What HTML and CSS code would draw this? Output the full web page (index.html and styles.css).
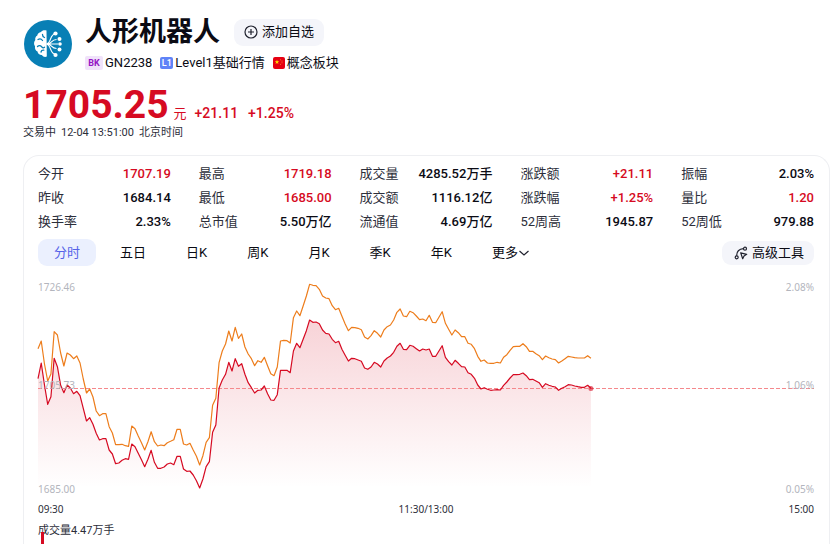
FILE: index.html
```html
<!DOCTYPE html>
<html lang="zh-CN">

<head>
    <title>人形机器人 GN2238</title>
    <meta charset="UTF-8">
    <meta name="viewport" content="width=device-width, initial-scale=1">
    <link rel="stylesheet" href="styles.css">
</head>

<body>
    <header class="quote-head">
        <svg class="logo" viewBox="-1 -1 50 50" aria-hidden="true">
            <circle cx="24" cy="24" r="24" fill="#087fb5" />
            <path d="M22.500 10.500c-2-.8-4.500-.3-5.500 1.500-2 .2-3.500 1.700-3.700 3.500-1.700 1-2.400 2.700-2 4.500-1.500 1.600-1.700 4.400-.3 6.200-.4 2.200.6 4.400 2.500 5.300.3 2.300 2.300 3.800 4.300 3.600 1.200 1.800 3.500 2.400 5 1.400z" fill="#fff" />
            <path d="M14 19.500c1.600-1 3.400-.6 4.500 1M18.500 14.500c0 1.500.7 2.500 2 3M13.500 26.500c1.200-1.200 3-1.200 4 .2s2.200 1.400 3 .6M17 32c.3-1.300 1.400-2 2.800-1.800" fill="none" stroke="#087fb5" stroke-width="1.300" stroke-linecap="round" />
            <path d="M22 24H34M23 24c5 0 4-4.500 9.500-4.500M23 24c5 0 4 4.500 9.500 4.500M23 23.500c4 0 3-9.500 8-9.500M23 24.500c4 0 3 9.500 8 9.500" fill="none" stroke="#fff" stroke-width="1.200" />
            <g fill="#fff">
                <circle cx="31.500" cy="13.500" r="2.100" />
                <circle cx="35.500" cy="19" r="2" />
                <circle cx="36" cy="24" r="1.800" />
                <circle cx="35.500" cy="29.500" r="2" />
                <circle cx="31.500" cy="35" r="2.100" />
            </g>
        </svg>
        <div class="quote-info">
            <div class="name-row">
                <h1>人形机器人</h1>
                <button type="button" class="btn btn-add">
                    <svg class="icon-add" viewBox="0 0 14 14" aria-hidden="true">
                        <circle cx="7" cy="7" r="6" />
                        <path d="M7 4v6M4 7h6" />
                    </svg>
                    添加自选
                </button>
            </div>
            <div class="tags">
                <span class="tag"><b class="badge badge-bk">BK</b>GN2238</span>
                <span class="tag"><b class="badge badge-l1">L1</b>Level1基础行情</span>
                <span class="tag">
                    <svg class="flag" viewBox="0 0 12 12" aria-hidden="true">
                        <rect width="12" height="12" rx="2" fill="#e60012" />
                        <path d="M4 2.700l.6 1.500 1.600.1-1.200 1 .4 1.600L4 6l-1.400.9.400-1.600-1.200-1 1.600-.1z" fill="#ffde00" />
                        <g fill="#f2932c">
                            <circle cx="7.500" cy="2.700" r=".5" />
                            <circle cx="9" cy="4" r=".5" />
                            <circle cx="9" cy="5.800" r=".5" />
                            <circle cx="7.500" cy="7.200" r=".5" />
                        </g>
                    </svg>
                    概念板块
                </span>
            </div>
        </div>
    </header>

    <div class="price-row">
        <strong class="price">1705.25</strong>
        <span class="unit">元</span>
        <span class="change">+21.11</span>
        <span class="change">+1.25%</span>
    </div>
    <div class="status">
        <span>交易中</span>
        <span>12-04 13:51:00</span>
        <span>北京时间</span>
    </div>

    <main class="card">
        <dl class="stats">
            <div><dt>今开</dt><dd class="up">1707.19</dd></div>
            <div><dt>最高</dt><dd class="up">1719.18</dd></div>
            <div><dt>成交量</dt><dd>4285.52万手</dd></div>
            <div><dt>涨跌额</dt><dd class="up">+21.11</dd></div>
            <div><dt>振幅</dt><dd>2.03%</dd></div>
            <div><dt>昨收</dt><dd>1684.14</dd></div>
            <div><dt>最低</dt><dd class="up">1685.00</dd></div>
            <div><dt>成交额</dt><dd>1116.12亿</dd></div>
            <div><dt>涨跌幅</dt><dd class="up">+1.25%</dd></div>
            <div><dt>量比</dt><dd class="up">1.20</dd></div>
            <div><dt>换手率</dt><dd>2.33%</dd></div>
            <div><dt>总市值</dt><dd>5.50万亿</dd></div>
            <div><dt>流通值</dt><dd>4.69万亿</dd></div>
            <div><dt>52周高</dt><dd>1945.87</dd></div>
            <div><dt>52周低</dt><dd>979.88</dd></div>
        </dl>

        <nav class="toolbar">
            <div class="tabs">
                <button type="button" class="tab active">分时</button>
                <button type="button" class="tab">五日</button>
                <button type="button" class="tab">日K</button>
                <button type="button" class="tab">周K</button>
                <button type="button" class="tab">月K</button>
                <button type="button" class="tab">季K</button>
                <button type="button" class="tab">年K</button>
                <button type="button" class="tab">更多<svg class="icon-more" viewBox="0 0 12 12" aria-hidden="true"><path d="M1.500 4L6 8l4.500-4" /></svg></button>
            </div>
            <button type="button" class="btn btn-tools">
                <svg class="icon-tools" viewBox="0 0 14 14" aria-hidden="true">
                    <circle cx="2.700" cy="11.300" r="1.500" />
                    <circle cx="11" cy="2.700" r="1.500" />
                    <path d="M2.700 9.800C2.500 5.500 5 2.900 9.500 2.700M6.700 6.800l6 1.500-2.700 1.600-1.300 2.800z" />
                </svg>
                高级工具
            </button>
        </nav>

        <section class="chart">
            <div class="axis axis-left">
                <span>1726.46</span>
                <span class="axis-mid">1705.73</span>
                <span>1685.00</span>
            </div>
            <div class="axis axis-right">
                <span>2.08%</span>
                <span class="axis-mid">1.06%</span>
                <span>0.05%</span>
            </div>
            <!-- one x unit = one trading minute -->
            <svg class="plot" viewBox="0 0 240 210" preserveAspectRatio="none" role="img" aria-label="分时">
                <defs>
                    <linearGradient id="fill" gradientUnits="userSpaceOnUse" x1="0" y1="40" x2="0" y2="208">
                        <stop offset="0" stop-color="#d60a22" stop-opacity=".18" />
                        <stop offset="1" stop-color="#d60a22" stop-opacity="0" />
                    </linearGradient>
                </defs>
                <path id="area" fill="url(#fill)" />
                <path class="now-line" d="M0 108.500H240" />
                <path id="avg" class="line line-avg" />
                <path id="price" class="line line-price" />
                <path class="now-dot" d="M171 108.500h0.001" />
            </svg>
        </section>
        <div class="times">
            <span>09:30</span>
            <span>11:30/13:00</span>
            <span>15:00</span>
        </div>
        <section class="volume">
            <div class="volume-title">成交量4.47万手</div>
            <div class="volume-bar"></div>
        </section>
    </main>
    <script src="chart.js"></script>
</body>

</html>
```

FILE: styles.css
```css
* {
    box-sizing: border-box;
}

body {
    margin: 0;
    min-height: 100vh;
    padding: 16px 8px 0 23px;
    display: flex;
    flex-direction: column;
    background-color: #fff;
    color: #0b0b14;
    font-family: Roboto, "Noto Sans CJK SC", sans-serif;
    font-size: 13px;
    line-height: 18px;
}

button {
    border: none;
    margin: 0;
    padding: 0;
    background: none;
    color: inherit;
    font: inherit;
    white-space: nowrap;
    cursor: pointer;
}

/* header */

.quote-head {
    display: flex;
    align-items: center;
    gap: 12px;
}

.logo {
    width: 50px;
    height: 50px;
    flex: none;
}

.name-row {
    display: flex;
    align-items: center;
    gap: 14px;
    height: 32px;
}

.name-row h1 {
    margin: 0;
    font-size: 27px;
    line-height: 30px;
    font-weight: 700;
}

.btn {
    display: flex;
    align-items: center;
    background-color: #f4f5fa;
    border-radius: 9px;
}

.btn svg {
    width: 14px;
    height: 14px;
    fill: none;
    stroke: #20222e;
    stroke-width: 1.2;
    stroke-linejoin: round;
}

.btn-add {
    height: 27px;
    padding: 0 10px;
    gap: 4px;
}

.tags {
    display: flex;
    gap: 8px;
    margin-top: 6px;
}

.tag {
    display: flex;
    align-items: center;
    gap: 2px;
    white-space: nowrap;
}

.badge {
    border-radius: 2px;
    font-size: 9px;
    line-height: 14px;
    text-align: center;
}

.badge-bk {
    width: 18px;
    background-color: #f0e2fa;
    color: #9413c4;
}

.badge-l1 {
    width: 13px;
    line-height: 12px;
    background-color: #5f83f7;
    color: #fff;
    font-weight: 500;
}

.flag {
    width: 12px;
    height: 12px;
}

/* price */

.price-row {
    display: flex;
    align-items: baseline;
    margin-top: 13px;
    height: 40px;
    color: #d60a22;
}

.price {
    font-size: 39px;
    line-height: 40px;
    font-weight: 700;
}

.unit {
    margin: 0 8px 0 5px;
}

.change {
    margin-right: 10px;
    font-size: 14px;
    font-weight: 500;
}

.status {
    display: flex;
    gap: 5px;
    font-size: 11px;
    line-height: 16px;
    color: #2c2e3a;
}

/* card */

.card {
    flex: 1;
    margin-top: 14px;
    padding: 6px 15px 0 14px;
    border: 1px solid #eeeff2;
    border-bottom: none;
    border-radius: 16px 16px 0 0;
}

.stats {
    display: grid;
    grid-template-columns: repeat(5, 1fr);
    column-gap: 28px;
    margin: 0;
    line-height: 24px;
}

.stats div {
    display: flex;
    justify-content: space-between;
    white-space: nowrap;
}

.stats dt {
    color: #2c2e3a;
}

.stats dd {
    margin: 0;
    font-weight: 500;
}

.stats .up {
    color: #d60a22;
}

.toolbar {
    display: flex;
    justify-content: space-between;
    align-items: center;
    margin-top: 5px;
}

.tabs {
    display: flex;
    gap: 8px;
}

.tab {
    display: flex;
    align-items: center;
    height: 27px;
    padding: 0 16px;
    border-radius: 9px;
}

.tab.active {
    background-color: #ebf0fe;
    color: #5563e8;
}

.icon-more {
    width: 12px;
    height: 12px;
    fill: none;
    stroke: #20222e;
    stroke-width: 1.2;
}

.btn-tools {
    height: 24px;
    padding: 0 10px 0 12px;
    gap: 4px;
}

/* intraday chart */

.chart {
    position: relative;
    height: 216px;
    margin-top: 14px;
}

.plot {
    display: block;
    width: 100%;
    height: 210px;
    overflow: visible;
}

.line {
    fill: none;
    stroke-width: 1.2;
    stroke-linejoin: round;
    vector-effect: non-scaling-stroke;
}

.line-avg {
    stroke: #ed7d1c;
}

.line-price {
    stroke: #d60a22;
}

.now-line {
    stroke: #f5888c;
    stroke-width: 1;
    stroke-dasharray: 4 2;
    vector-effect: non-scaling-stroke;
}

.now-dot {
    stroke: #d60a22;
    stroke-opacity: .6;
    stroke-width: 5;
    stroke-linecap: round;
    vector-effect: non-scaling-stroke;
}

.axis {
    position: absolute;
    top: 0;
    bottom: 0;
    display: flex;
    flex-direction: column;
    justify-content: space-between;
    color: #b3b5bd;
    font-family: "Noto Sans", sans-serif;
    font-size: 10px;
    line-height: 14px;
}

.axis-left {
    left: 0;
}

.axis-right {
    right: 0;
    text-align: right;
}

/* keeps the middle label just above the dashed line */
.axis-mid {
    padding-bottom: 6px;
}

.times {
    display: flex;
    justify-content: space-between;
    margin-top: 5px;
    font-family: "Noto Sans", sans-serif;
    font-size: 10px;
    line-height: 16px;
    color: #2c2e3a;
}

.volume {
    position: relative;
    margin-top: 6px;
    font-size: 11px;
    line-height: 16px;
    color: #2c2e3a;
}

.volume-bar {
    position: absolute;
    top: 9px;
    left: 3px;
    width: 3px;
    height: 12px;
    background-color: #d60a22;
}
```

FILE: chart.js
```js
// plot heights, one value per trading minute from 09:30
var avg = [
    68.7, 61, 84, 101, 94, 51.7, 55, 73, 86, 73, 75, 78.7, 76, 83, 99, 113, 109, 117, 131, 135.7,
    133.7, 133.7, 146.7, 153, 164.7, 164.7, 164.3, 165.7, 166.3, 146, 148.7, 156, 162.7, 170, 161.7, 151.7, 161.7, 166, 165, 165.7,
    162.7, 161.3, 159.7, 149.3, 149.3, 164, 165, 163.3, 170, 176.3, 185, 175.7, 162.3, 157.7, 125.3, 118.3, 82.7, 71, 64, 51,
    61, 47.3, 58.3, 54, 67, 74, 78.7, 85.7, 80.7, 82.3, 77.3, 85.7, 93.7, 95.7, 87, 61, 60.3, 60.7, 63, 37.7,
    31, 35.7, 26, 16, 4.3, 5.3, 5.7, 9.3, 16, 18, 18.7, 25.7, 29.7, 28.3, 36.3, 44, 50.7, 47.3, 47.7, 48.3,
    49.7, 57, 59, 55.7, 50.7, 53.3, 57, 50, 46.7, 45, 40, 32.3, 29, 36, 36.7, 31.3, 32.7, 36, 39.7, 39,
    40.7, 35.3, 42.3, 42.7, 37.3, 31.7, 43.3, 49.3, 55, 50, 52.7, 56.7, 56.7, 63.3, 64.3, 68.7, 76.3, 81.3, 80, 83,
    83.3, 83.3, 82.3, 83, 77.3, 74.7, 70.3, 66.7, 66.3, 66.3, 63.7, 66.7, 71.3, 71.3, 73.7, 75.7, 79.7, 76, 77.7, 79,
    79.7, 83, 81, 78.7, 76.3, 77, 77.7, 78, 78, 78, 75.7, 78.3
];

var price = [
    98.7, 83, 105, 124.3, 116.7, 78.3, 86.7, 105.3, 112.7, 105, 108, 113.7, 111.3, 115.7, 128.3, 141, 137.7, 144.3, 153.3, 160,
    158.7, 158.7, 170, 174, 183.7, 183, 180.3, 178.7, 179.3, 164, 166.7, 173.3, 179.7, 186.7, 179.3, 170.3, 182.3, 188.3, 188.3, 187,
    184, 183, 184.7, 176.3, 176.3, 189, 191.3, 191, 195, 200.7, 208, 199, 186.7, 181.7, 152.3, 145, 108, 100, 94.3, 82.3,
    91, 78.7, 86.3, 83.7, 94.3, 102.7, 107.7, 113, 110.3, 110, 106, 113.7, 120, 120.3, 114.7, 90.3, 90.3, 90.3, 92.7, 71,
    63.3, 67.7, 59.3, 50.7, 40, 42.3, 42, 43.7, 50, 53.3, 54, 59.3, 62.7, 61.3, 69.3, 75.3, 81, 78.3, 78.7, 80,
    81.3, 88, 89.3, 87, 82.3, 84, 87, 81, 78, 76, 72.3, 66.3, 63.3, 69.3, 69.7, 65.3, 66.3, 68.7, 71, 69,
    70, 69, 76.3, 76.3, 71, 65.7, 77.3, 81.7, 85, 80.3, 83.3, 86.7, 87, 92.7, 94.3, 98.3, 105, 109, 107.7, 109.3,
    110.3, 110, 109.7, 110, 105.3, 102, 98, 94.7, 94.7, 94.3, 93, 95.7, 99.7, 99.3, 101, 102.7, 107.3, 103.7, 105.3, 106.3,
    107, 110.3, 108.3, 106.7, 104.7, 105, 106, 106.7, 107.3, 107.3, 105.3, 108.3
];

function toPath(values) {
    return 'M' + values.map(function (y, minute) {
        return minute + ' ' + y;
    }).join('L');
}

document.getElementById('avg').setAttribute('d', toPath(avg));
document.getElementById('price').setAttribute('d', toPath(price));
document.getElementById('area').setAttribute('d', toPath(price) + 'V208H0Z');
```
